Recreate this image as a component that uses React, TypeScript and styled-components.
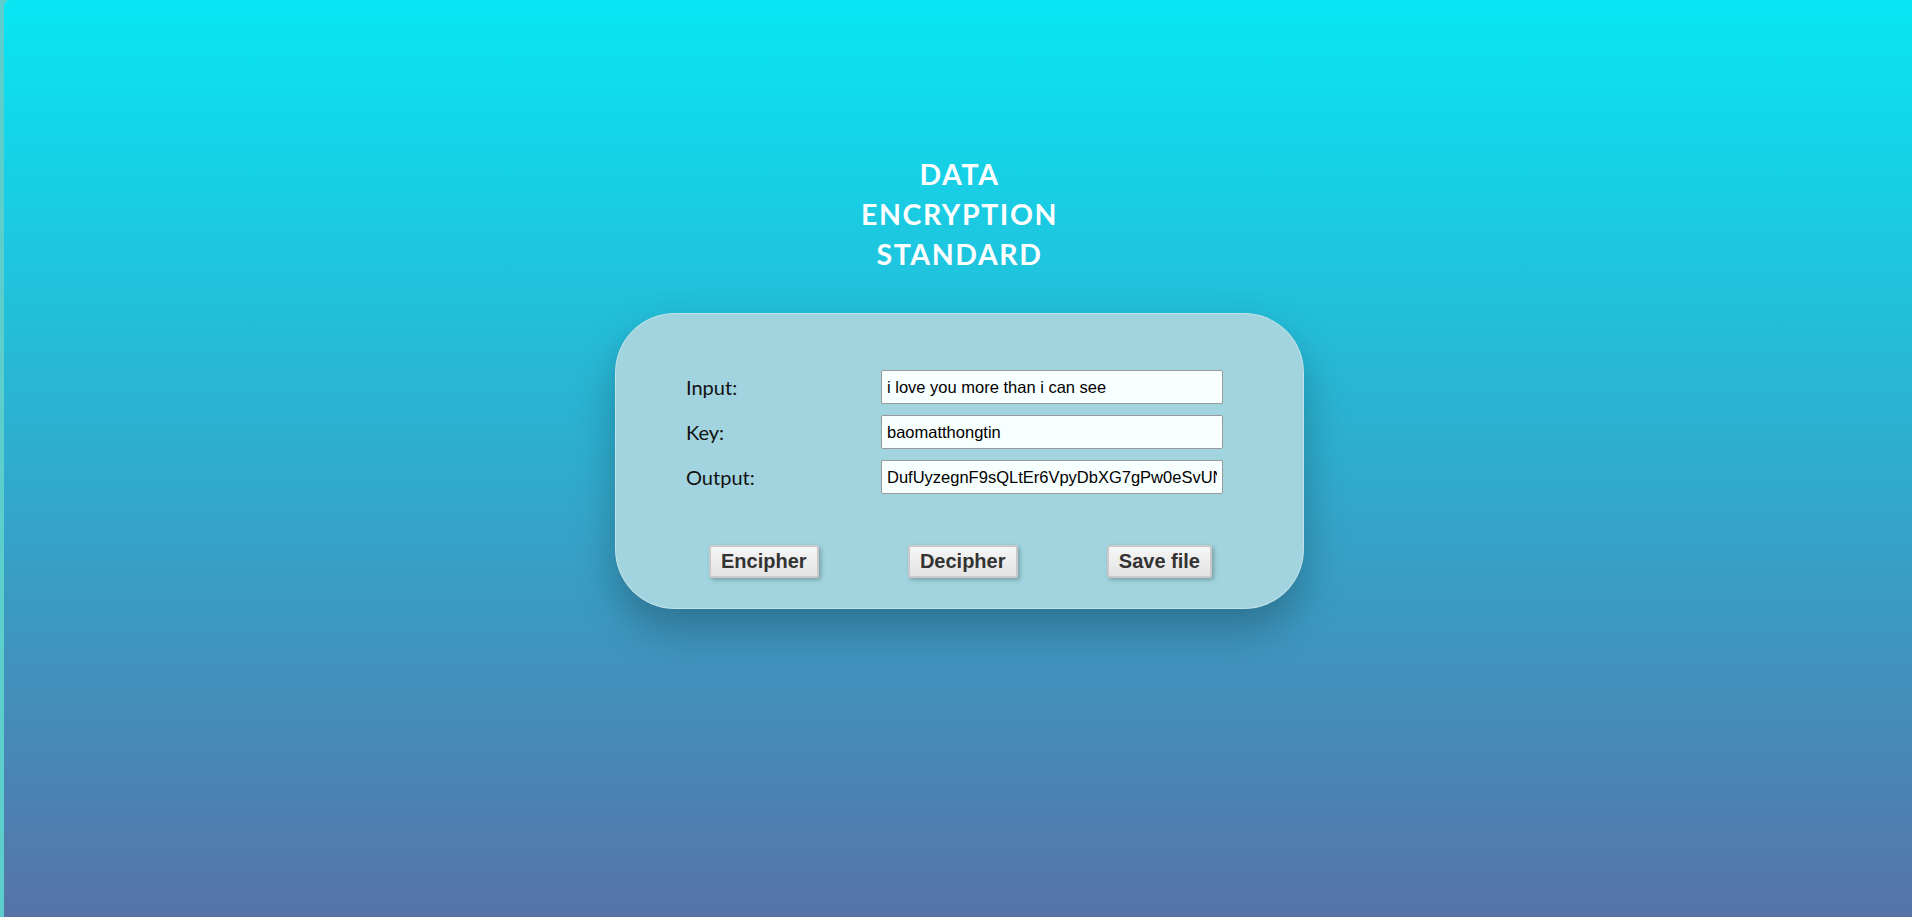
import styled, { createGlobalStyle } from "styled-components";

const GlobalStyle = createGlobalStyle`
  html,
  body {
    margin: 0;
    padding: 0;
    background: #5ccfcc;
  }

  * {
    box-sizing: border-box;
  }
`;

interface fieldProps {
  label: string;
  value: string;
}

const fields: fieldProps[] = [
  { label: "Input:", value: "i love you more than i can see" },
  { label: "Key:", value: "baomatthongtin" },
  { label: "Output:", value: "DufUyzegnF9sQLtEr6VpyDbXG7gPw0eSvUNz0pQ" },
];

const actions = ["Encipher", "Decipher", "Save file"];

const App: React.FC = () => {
  return (
    <>
      <GlobalStyle />
      <Page>
        <Title>DATA ENCRYPTION STANDARD</Title>
        <Card>
          <FieldGrid>
            {fields.map((f) => (
              <Field key={f.label}>
                <Label>{f.label}</Label>
                <TextInput type="text" defaultValue={f.value} />
              </Field>
            ))}
          </FieldGrid>
          <ButtonRow>
            {actions.map((a) => (
              <ActionButton key={a} type="button">
                {a}
              </ActionButton>
            ))}
          </ButtonRow>
        </Card>
      </Page>
    </>
  );
};

export default App;

const Page = styled.div`
  margin-left: 4px;
  min-height: 917px;
  display: flex;
  flex-direction: column;
  align-items: center;
  padding: 154px 0 0 3px;
  border-top-left-radius: 6px;
  background: linear-gradient(to bottom, #08e6f4 0%, #5673a8 100%);
  font-family: Lato, "Open Sans", sans-serif;
`;

const Title = styled.h1`
  width: min-content;
  margin: 0;
  color: #ffffff;
  font-size: 28.5px;
  font-weight: 700;
  line-height: 40px;
  letter-spacing: 1.6px;
  text-align: center;
`;

const Card = styled.div`
  width: 689px;
  margin-top: 39px;
  padding: 56px 0 30px 70px;
  border: 1px solid rgba(255, 255, 255, 0.35);
  border-radius: 60px;
  background-color: #a1d4de;
  box-shadow: 0 20px 40px rgba(0, 0, 0, 0.25);
`;

const FieldGrid = styled.div`
  display: flex;
  flex-direction: column;
  gap: 11px;
`;

const Field = styled.div`
  display: grid;
  grid-template-columns: 195px 342px;
  align-items: center;
`;

const Label = styled.label`
  color: #111111;
  font-size: 20px;
`;

const TextInput = styled.input`
  width: 342px;
  height: 34px;
  padding: 0 5px;
  border: 1px solid #9a9a9a;
  border-radius: 2px;
  background-color: #f8ffff;
  color: #000000;
  font-family: "Liberation Sans", Arial, sans-serif;
  font-size: 16.5px;
  outline: none;
`;

const ButtonRow = styled.div`
  display: flex;
  justify-content: space-between;
  width: 503px;
  margin: 51px 0 0 23px;
`;

const ActionButton = styled.button`
  height: 33px;
  padding: 3px 10px;
  border: 2px solid #c9c9c9;
  border-radius: 3px;
  background: linear-gradient(to bottom, #f6f6f6, #e3e3e3);
  box-shadow: 2px 2px 4px rgba(0, 0, 0, 0.25);
  color: #333333;
  font-family: "Liberation Sans", Arial, sans-serif;
  font-size: 20px;
  font-weight: 700;
  line-height: 23px;
  cursor: pointer;
`;
